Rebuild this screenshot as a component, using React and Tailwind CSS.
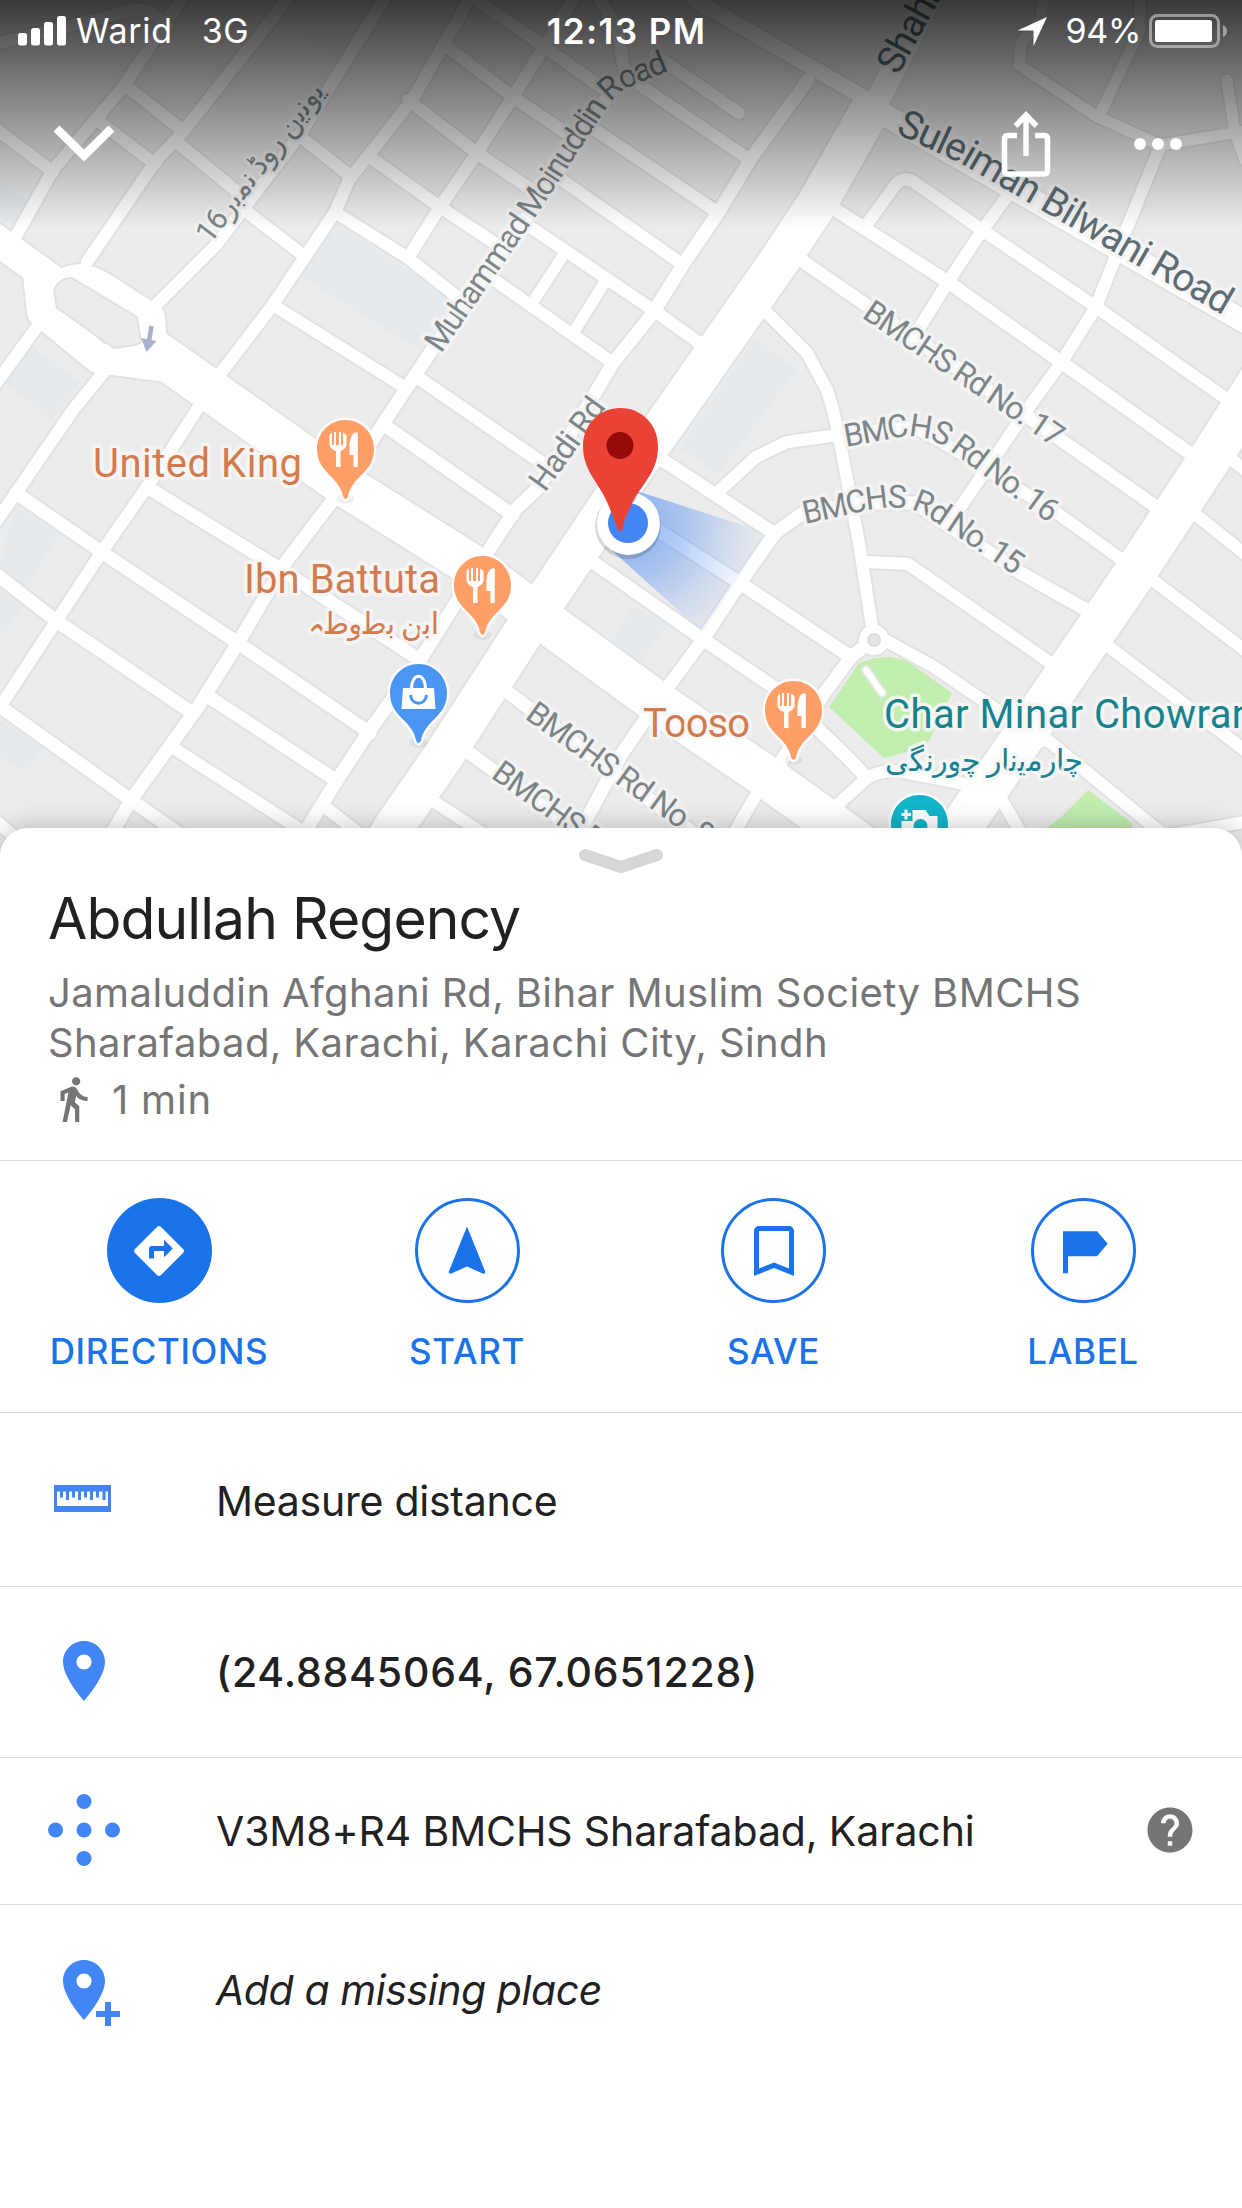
import React from "react";

/* Road network of the map: [stroke width, path] */
const ROADS = [
  // north-east to south-west streets
  [12, "M181 0L123 87L53 170L16 236"],
  [12, "M287 0L182 133L155 162L87 262"],
  [12, "M384 0L301 133L216 245L156 305"],
  [12, "M469 0L412 100L349 180L335 212L272 306L220 374"],
  [12, "M200 405L147 487L103 550L55 623L0 707"],
  [12, "M107 368L73 410L16 493L-5 523"],
  [12, "M42 320L-5 385"],
  [12, "M573 0L513 97L477 153L440 207L408 258"],
  [13, "M617 83L535 205L432 350L402 395L333 500L285 563L238 643L198 707L131 800L108 840"],
  [13, "M808 80L752 157L718 213L684 263L653 313L613 363L539 487L515 510L487 553L420 660L368 733L337 780L300 840"],
  [11, "M562 257L533 302"],
  [11, "M603 285L575 330"],
  // north-west to south-east streets
  [12, "M-5 128L53 172"],
  [12, "M-5 44L110 16Q140 5 150 12L168 26"],
  [12, "M125 85L182 130"],
  [12, "M101 123L155 164"],
  [12, "M178 143L235 190L247 212L299 252"],
  [12, "M301 137L349 175"],
  [12, "M335 212L408 258L460 299"],
  [12, "M273 305L404 387"],
  [12, "M477 0L545 47L605 90"],
  [12, "M445 45L513 97L572 137"],
  [12, "M408 100L477 153L535 192"],
  [12, "M370 157L440 207L502 248"],
  [12, "M637 83L750 160"],
  [12, "M588 125L717 212"],
  [12, "M552 173L682 264"],
  [12, "M520 220L656 312L705 347"],
  [12, "M490 277L613 363"],
  [12, "M600 0L618 30L624 70"],
  [12, "M655 55L739 113"],
  [13, "M417 377L548 467"],
  [13, "M384 425L513 515"],
  [15, "M695 0L865 98"],
  [13, "M16 493L103 553L238 643L370 733"],
  [13, "M-5 573L55 620L188 710"],
  [13, "M206 695L337 781"],
  [13, "M147 487L285 572L420 660"],
  [13, "M-5 703L131 800L185 838"],
  [12, "M172 747L310 836"],
  [12, "M325 807L365 838"],
  [12, "M-5 820L30 850"],
  [13, "M505 690L700 838"],
  [13, "M468 752L592 842"],
  [12, "M436 803L490 838"],
  // eastern blocks
  [11, "M1043 0L1041 20L1021 43L1019 65L1096 116L1160 145L1245 131"],
  [11, "M1140 0L1140 30L1100 114"],
  [11, "M1227 80L1235 133L1245 160"],
  [12, "M1160 147L1124 235L1096 307L1061 363L1029 407L955 515"],
  [22, "M885 115L1245 322"],
  [12, "M867 224L896 184Q904 176 914 182L985 232L1096 307L1245 412"],
  [12, "M1008 195L981 232L948 282L918 330"],
  [13, "M825 203L870 232L948 282L1061 362L1195 457"],
  [13, "M798 258L866 305L1061 440L1155 506"],
  [12, "M764 310L807 353L827 390L833 410L839 437L859 543L872 627"],
  [12, "M720 490L756 457L787 442L845 434L914 427L950 447L1057 513L1125 562"],
  [13, "M655 455L775 534"],
  [13, "M585 822L621 755L665 691L704 638L740 583L775 533L803 513L862 503L914 503L1021 573L1090 612"],
  [12, "M867 562L908 564L1052 664"],
  [13, "M590 560L704 640L775 688L819 730L847 757L867 778"],
  [13, "M645 522L740 583L851 657"],
  [13, "M872 640L851 657L823 695L779 765"],
  [12, "M885 640L934 667L997 710L1040 742"],
  [12, "M836 806L867 778Q880 770 898 771L975 786"],
  [12, "M996 790L1025 840"],
  [12, "M1045 738L1165 836L1245 822"],
  [12, "M1220 450L1250 474"],
  [12, "M1190 510L1250 558"],
  [12, "M1150 578L1250 654"],
  [12, "M1100 640L1250 754"],
  [12, "M756 795L730 840"],
  [10, "M874 630a10 10 0 1 0 .1 0z"],
  // avenues
  [30, "M-20 228L62 287Q76 272 100 286L150 318L152 345"],
  [30, "M38 275L42 312L98 358L120 361L180 369"],
  [42, "M150 348L180 369L347 487L468 563L553 627L658 703L765 776L885 862"],
  [24, "M878 100L934 -10"],
  [40, "M869 112L818 202L782 257L731 330L668 420L636 465L547 598L525 630L444 755L394 827L380 850"],
  [42, "M1260 380L1209 460L1130 580L1021 740L961 827L945 855"],
];

const WATER = [
  "335,223 455,300 420,350 299,275",
  "0,182 27,200 13,223 0,220",
  "30,345 81,382 52,420 2,380",
  "300,0 374,0 336,60 290,30",
  "755,338 797,370 718,475 680,447",
  "14,505 59,535 26,587 0,568",
  "0,590 24,603 4,633 0,630",
  "0,720 43,747 26,772 0,757",
  "633,607 668,620 641,663 612,642",
];

const PARKS = [
  "859,663 875,658 890,657 906,660 952,693 926,747 884,758 829,707",
  "1088,790 1132,823 1132,840 1030,840 1060,818",
];

const STREET_LABELS = [
  { id: "moin", d: "M441 354L537 215L608 106Q618 91 634 85L690 62", text: "Muhammad Moinuddin Road", size: 32, len: 371 },
  { id: "hadi", d: "M545 493L619 390", text: "Hadi Rd", size: 32, len: 106 },
  { id: "rd17", d: "M861 317L1080 465", text: "BMCHS Rd No. 17", size: 32, len: 234 },
  { id: "rd16", d: "M846 447L900 437Q925 434 945 447L1080 546", text: "BMCHS Rd No. 16", size: 32, len: 231 },
  { id: "rd15", d: "M805 524L860 512Q900 502 925 515L1045 596", text: "BMCHS Rd No. 15", size: 32, len: 231 },
  { id: "rd8", d: "M524 718L717 856", text: "BMCHS Rd No. 8", size: 32, len: 222 },
  { id: "rd7", d: "M490 777L683 915", text: "BMCHS Rd No. 7", size: 32, len: 222 },
];

const MAJOR_LABELS = [
  { id: "sul", d: "M895 133L960 163L1250 331", text: "Suleiman Bilwani Road", size: 39, len: 376 },
  { id: "shah", d: "M898 76L980 -74", text: "Shahrah", size: 38, len: 132 },
];

const PIN = "M0 0C-16 0-28.5 13-28.5 29C-28.5 42-22 49-14 57C-7 64-3.5 70-2.6 76Q-1.5 79 0 79Q1.5 79 2.6 76C3.5 70 7 64 14 57C22 49 28.5 42 28.5 29C28.5 13 16 0 0 0Z";

function Poi({ x, y, color, children }) {
  return (
    <g transform={`translate(${x} ${y})`}>
      <ellipse cx="0" cy="79" rx="9" ry="5" fill="#000" opacity=".06" />
      <path d={PIN} fill={color} stroke="#fff" strokeOpacity=".85" strokeWidth="5" paintOrder="stroke" />
      {children}
    </g>
  );
}

function Cutlery() {
  return (
    <g fill="#fff">
      <path d="M-16 15L-13.5 12.5V25H-11.5V12H-9.5V25H-6.5V12H-4.5V25H-2.5V12.5L1 15V25Q0 29-5 31V47H-9.5V31Q-15 29-16 25Z" />
      <path d="M12.3 12.5V47H8V35H4V24Q5 15 9 12.5Z" />
    </g>
  );
}

function PathLabel({ label, fill, halo }) {
  return (
    <>
      <path id={label.id} d={label.d} fill="none" />
      <text
        fontSize={label.size}
        textLength={label.len}
        fill={fill}
        stroke="#f4f4f4"
        strokeOpacity={halo}
        strokeWidth="7"
        strokeLinejoin="round"
        paintOrder="stroke"
      >
        <textPath href={`#${label.id}`} textLength={label.len}>{label.text}</textPath>
      </text>
    </>
  );
}

function MapView() {
  return (
    <svg className="block h-[860px] w-full" viewBox="0 0 1242 860" fontFamily="Roboto, 'DejaVu Sans', sans-serif">
      <defs>
        <radialGradient id="beam" gradientUnits="userSpaceOnUse" cx="628" cy="523" r="140">
          <stop offset="0" stopColor="#4285f4" stopOpacity=".65" />
          <stop offset=".4" stopColor="#5b93f2" stopOpacity=".45" />
          <stop offset="1" stopColor="#7aa5f0" stopOpacity="0" />
        </radialGradient>
        <linearGradient id="shade" x1="0" y1="0" x2="0" y2="1">
          <stop offset="0" stopColor="#000" stopOpacity=".76" />
          <stop offset="1" stopColor="#000" stopOpacity="0" />
        </linearGradient>
      </defs>
      <rect width="1242" height="860" fill="#ececec" />
      {WATER.map((p) => <polygon key={p} points={p} fill="#e6eaed" />)}
      {PARKS.map((p) => <polygon key={p} points={p} fill="#c1edae" />)}
      <g fill="none" stroke="#e2e2e2" strokeLinejoin="round" strokeLinecap="round">
        {ROADS.map(([w, d]) => <path key={d} d={d} strokeWidth={w + 4} />)}
      </g>
      <g fill="none" stroke="#fff" strokeLinejoin="round" strokeLinecap="round">
        {ROADS.map(([w, d]) => <path key={d} d={d} strokeWidth={w} />)}
      </g>
      <path d="M72 278L137 317L141 342L136 345L114 348L57 308L54 290Q60 277 72 278Z" fill="#ececec" stroke="#e1e1e1" strokeWidth="2" />
      <circle cx="874" cy="640" r="6" fill="#e4e4e4" stroke="#dcdcdc" strokeWidth="2" />
      <path d="M866 670L882 693" stroke="#e3e8e0" strokeWidth="10" strokeLinecap="round" />
      <path d="M866 670L882 693" stroke="#fff" strokeWidth="6" strokeLinecap="round" />
      <path d="M151.500 326L149 341" stroke="#aab0cf" strokeWidth="4.500" />
      <path d="M141 338L156.500 341L146.500 352Z" fill="#aab0cf" />

      {STREET_LABELS.map((l) => <PathLabel key={l.id} label={l} fill="#7d8587" halo=".9" />)}
      {MAJOR_LABELS.map((l) => <PathLabel key={l.id} label={l} fill="#5c6c72" halo=".75" />)}
      <text
        transform="translate(268 168) rotate(-53)"
        textAnchor="middle"
        fontSize="30"
        textLength="192"
        fill="#7d8587"
        stroke="#f4f4f4"
        strokeWidth="6"
        strokeLinejoin="round"
        paintOrder="stroke"
      >
        یونین روڈ نمبر16
      </text>

      <g strokeWidth="7" strokeLinejoin="round" paintOrder="stroke" stroke="#f7f7f7" strokeOpacity=".9">
        <g fill="#d27b4e">
          <text x="93" y="477" fontSize="40" textLength="209">United King</text>
          <text x="244" y="592.500" fontSize="40" textLength="196">Ibn Battuta</text>
          <text x="308" y="634" fontSize="30" textLength="131">ابن بطوطہ</text>
          <text x="643" y="737" fontSize="40" textLength="107">Tooso</text>
        </g>
        <g fill="#17828c">
          <text x="884" y="728" fontSize="40" textLength="403">Char Minar Chowrangi</text>
          <text x="885" y="771" fontSize="30" textLength="198">چارمینار چورنگی</text>
        </g>
      </g>

      <Poi x={345.500} y={420} color="#ff9e67"><Cutlery /></Poi>
      <Poi x={482.500} y={556} color="#ff9e67"><Cutlery /></Poi>
      <Poi x={793.500} y={681} color="#ff9e67"><Cutlery /></Poi>
      <Poi x={418.500} y={664} color="#4b96f3">
        <path d="M-15.500 24H15.500L17 45H-17Z" fill="#fff" />
        <path d="M-7 25C-7 8 7 8 7 25" fill="none" stroke="#fff" strokeWidth="3" />
        <path d="M-8 31C-7 42 7 42 8 31" fill="none" stroke="#4b96f3" strokeWidth="3" />
      </Poi>
      <Poi x={919.500} y={795} color="#12b5cb">
        <path d="M-18 18H-15V14.500H-12V18H-8.500V21H-12V24.500H-15V21H-18Z" fill="#fff" />
        <path d="M-6 15H6L10 21H18V45H-18V26H-7V15Z" fill="#fff" />
        <circle cx="1" cy="31" r="7" fill="#12b5cb" />
      </Poi>

      <polygon points="637,491 767,533 703,633 606,545" fill="url(#beam)" />
      <circle cx="628" cy="526" r="33" fill="#000" opacity=".15" />
      <circle cx="628.500" cy="523.500" r="31.500" fill="#fff" />
      <circle cx="628" cy="523" r="20" fill="#4285f4" />
      <path d="M620.500 408C600 408 583 424 583 446C583 471 598 481 607 502C614 518 616 525 618 530Q620 533 622 530C624 521 627 513 634 500C645 480 658 471 658 446C658 424 641 408 620.500 408Z" fill="#ea4335" />
      <circle cx="620" cy="445.500" r="13.500" fill="#960a0a" />
      <rect width="1242" height="228" fill="url(#shade)" />
    </svg>
  );
}

function StatusBar() {
  return (
    <div className="flex h-[62px] items-center text-[34px] leading-none text-white">
      <div className="flex flex-1 items-center pl-[18px]">
        <svg width="49" height="30" viewBox="0 0 49 30" fill="#fff" className="shrink-0">
          <rect x="0" y="17" width="9" height="12.500" rx="2.500" />
          <rect x="13" y="12" width="9" height="17.500" rx="2.500" />
          <rect x="26" y="6" width="9" height="23.500" rx="2.500" />
          <rect x="39" y="0" width="9" height="29.500" rx="2.500" />
        </svg>
        <span className="ml-[9px] tracking-[0.7px]">Warid</span>
        <span className="ml-[29px] tracking-[0.5px]">3G</span>
      </div>
      <span className="pl-[7px] text-[35px] font-semibold tracking-[1.4px]">12:13 PM</span>
      <div className="flex flex-1 items-center justify-end pr-[14px]">
        <svg width="31" height="31" viewBox="0 0 31 31" className="mr-[17px]">
          <path d="M30 1L16.500 30V14.500H0.500Z" fill="#fff" />
        </svg>
        <span className="mr-[8px] tracking-[-0.3px]">94%</span>
        <svg width="79" height="34" viewBox="0 0 79 34">
          <rect x="1.500" y="1.500" width="68" height="31" rx="7" fill="none" stroke="#fff" strokeOpacity=".45" strokeWidth="3" />
          <rect x="6" y="6" width="57" height="22" rx="2.500" fill="#fff" />
          <path d="M74 11Q78 13 78 17Q78 21 74 23Z" fill="#fff" fillOpacity=".45" />
        </svg>
      </div>
    </div>
  );
}

function Toolbar() {
  return (
    <div className="flex h-[164px] items-center pl-[53px] pr-[60px]">
      <svg width="62" height="40" viewBox="0 0 62 40" fill="none">
        <path d="M3.500 4.500L31 31.500L58.500 4.500" stroke="#fff" strokeWidth="8.500" />
      </svg>
      <svg width="50" height="68" viewBox="0 0 50 68" className="mt-[2px] ml-auto" fill="none">
        <path d="M16 24.500H7Q3.500 24.500 3.500 28V59.500Q3.500 63 7 63H43Q46.500 63 46.500 59.500V28Q46.500 24.500 43 24.500H34" stroke="#fff" strokeWidth="5.500" />
        <path d="M25 45V5M14.500 15L25 4L35.500 15" stroke="#fff" strokeWidth="5.500" />
      </svg>
      <div className="ml-[83px] flex gap-[6px]">
        <i className="size-[12px] rounded-full bg-white" />
        <i className="size-[12px] rounded-full bg-white" />
        <i className="size-[12px] rounded-full bg-white" />
      </div>
    </div>
  );
}

function Action({ label, filled, className = "w-[218px]", children }) {
  return (
    <div className={"flex flex-col items-center text-[#1a73e8] " + className}>
      <div className={"flex size-[105px] items-center justify-center rounded-full " + (filled ? "bg-[#1a73e8] text-white" : "border-[3px] border-[#1a73e8]")}>
        <svg width="60" height="60" viewBox="0 0 24 24" fill="currentColor" className="shrink-0">{children}</svg>
      </div>
      <span className="mt-[30px] text-[35px] leading-[36px] font-medium tracking-[0.6px] whitespace-nowrap">{label}</span>
    </div>
  );
}

function Row({ className, icon, children, trailing }) {
  return (
    <div className={"flex items-center pl-12 pr-[45px] " + className}>
      <div className="flex w-[72px] shrink-0 justify-center text-[#4285f4]">{icon}</div>
      <div className="ml-[96px] flex-1 text-[41px] leading-[50px] whitespace-nowrap">{children}</div>
      {trailing}
    </div>
  );
}

const PLACE = "M12 2C8.130 2 5 5.130 5 9c0 5.250 7 13 7 13s7-7.750 7-13c0-3.870-3.130-7-7-7zm0 9.500c-1.380 0-2.500-1.120-2.500-2.500s1.120-2.500 2.500-2.500 2.500 1.120 2.500 2.500-1.120 2.500-2.500 2.500z";

export default function App() {
  return (
    <div className="relative flex h-[2208px] w-[1242px] flex-col overflow-hidden bg-white font-['Inter',sans-serif] text-[#212121]">
      <header className="relative h-[828px] shrink-0">
        <MapView />
        <div className="absolute inset-x-0 top-0">
          <StatusBar />
          <Toolbar />
        </div>
      </header>

      <main className="relative flex flex-1 flex-col rounded-t-[28px] bg-white shadow-[0_-2px_24px_rgba(0,0,0,0.22)]">
        <section className="flex h-[333px] flex-col border-b border-[#dadada] px-12">
          <svg width="88" height="26" viewBox="0 0 88 26" className="mt-[19px] self-center" fill="none">
            <path d="M8 8L44 20L80 8" stroke="#d6d6d6" strokeWidth="12" strokeLinecap="round" strokeLinejoin="round" />
          </svg>
          <h1 className="mt-[14px] text-[57px] leading-[64px] font-normal tracking-[-0.9px] whitespace-nowrap">Abdullah Regency</h1>
          <p className="mt-[17px] text-[40px] leading-[50px] tracking-[0.4px] whitespace-nowrap text-[#757575]">
            Jamaluddin Afghani Rd, Bihar Muslim Society BMCHS
            <br />
            Sharafabad, Karachi, Karachi City, Sindh
          </p>
          <div className="mt-[6px] flex items-center text-[40px] leading-[50px] text-[#757575]">
            <svg width="50" height="50" viewBox="0 0 24 24" fill="currentColor" className="mr-[14px] mb-[2px]">
              <path d="M13.500 5.500c1.100 0 2-.9 2-2s-.9-2-2-2-2 .9-2 2 .9 2 2 2zM9.800 8.900L7 23h2.100l1.800-8 2.100 2v6h2v-7.500l-2.100-2 .6-3C14.800 12 16.800 13 19 13v-2c-1.900 0-3.500-1-4.300-2.400l-1-1.600c-.4-.6-1-1-1.700-1-.3 0-.5.1-.8.1L6 8.300V13h2V9.600l1.800-.7" />
            </svg>
            <span className="tracking-[0.8px]">1 min</span>
          </div>
        </section>

        <section className="flex h-[252px] justify-between border-b border-[#dadada] pl-[50px] pr-[50px] pt-[37px]">
          <Action label="DIRECTIONS" filled>
            <path d="M21.710 11.290l-9-9c-.39-.39-1.020-.39-1.410 0l-9 9c-.39.39-.39 1.020 0 1.410l9 9c.39.39 1.020.39 1.410 0l9-9c.39-.38.39-1.010 0-1.410zM14 14.500V12h-4v3H8v-4c0-.55.45-1 1-1h5V7.500l3.500 3.500-3.500 3.500z" />
          </Action>
          <Action label="START">
            <path d="M12 2.200L4.600 20.490l.71.71L12 18.200l6.690 3 .71-.71z" />
          </Action>
          <Action label="SAVE" className="w-[218px] pr-[3px]">
            <path fillRule="evenodd" d="M18 2H6C4.900 2 4 2.900 4 4V22L12 18.800L20 22V4C20 2.900 19.100 2 18 2ZM18 19L12 16.600L6 19V4H18Z" />
          </Action>
          <Action label="LABEL">
            <path d="M4 4.100H17.600L21.900 9.100L17.600 14.100H6V20.900H4Z" />
          </Action>
        </section>

        <Row
          className="h-[174px] border-b border-[#dadada]"
          icon={
            <svg width="57" height="27" viewBox="0 0 57 27" fill="currentColor" className="mr-[3px] mb-[3px]">
              <path fillRule="evenodd" d="M0 0H57V27H0ZM3 6.500V21H54V6.500H51.500V15H48.500V6.500H45V12.500H42V6.500H39V15H36V6.500H33V12.500H30V6.500H27V15H24V6.500H21V12.500H18V6.500H15V15H12V6.500H9V12.500H6V6.500Z" />
            </svg>
          }
        >
          <span className="relative top-px tracking-[-0.25px]">Measure distance</span>
        </Row>
        <Row
          className="h-[171px] border-b border-[#dadada]"
          icon={<svg width="72" height="72" viewBox="0 0 24 24" fill="currentColor" className="mb-[2px]"><path d={PLACE} /></svg>}
        >
          <span className="font-medium tracking-[0.8px]">(24.8845064, 67.0651228)</span>
        </Row>
        <Row
          className="h-[147px] border-b border-[#dadada]"
          icon={
            <svg width="72" height="72" viewBox="0 0 72 72" fill="currentColor" className="mb-[2px]">
              <circle cx="36" cy="36" r="7.500" />
              <circle cx="7.500" cy="36" r="7.500" />
              <circle cx="64.500" cy="36" r="7.500" />
              <circle cx="36" cy="7.500" r="7.500" />
              <circle cx="36" cy="64.500" r="7.500" />
            </svg>
          }
          trailing={
            <svg width="54" height="54" viewBox="0 0 24 24" fill="#757575" className="mb-[2px]">
              <path d="M12 2C6.480 2 2 6.480 2 12s4.480 10 10 10 10-4.480 10-10S17.520 2 12 2zm1 17h-2v-2h2v2zm2.070-7.750l-.9.920C13.450 12.900 13 13.500 13 15h-2v-.5c0-1.100.45-2.100 1.170-2.830l1.240-1.260c.37-.36.59-.86.59-1.410 0-1.100-.9-2-2-2s-2 .9-2 2H8c0-2.210 1.790-4 4-4s4 1.790 4 4c0 .88-.36 1.680-.93 2.250z" />
            </svg>
          }
        >
          <span className="tracking-[-0.13px]">V3M8+R4 BMCHS Sharafabad, Karachi</span>
        </Row>
        <Row
          className="h-[169px]"
          icon={
            <svg width="72" height="72" viewBox="0 0 24 24" fill="currentColor">
              <path d={PLACE} />
              <path d="M19 16H21V19H24V21H21V24H19V21H16V19H19Z" />
            </svg>
          }
        >
          <span className="italic tracking-[-0.42px]">Add a missing place</span>
        </Row>
      </main>
    </div>
  );
}
